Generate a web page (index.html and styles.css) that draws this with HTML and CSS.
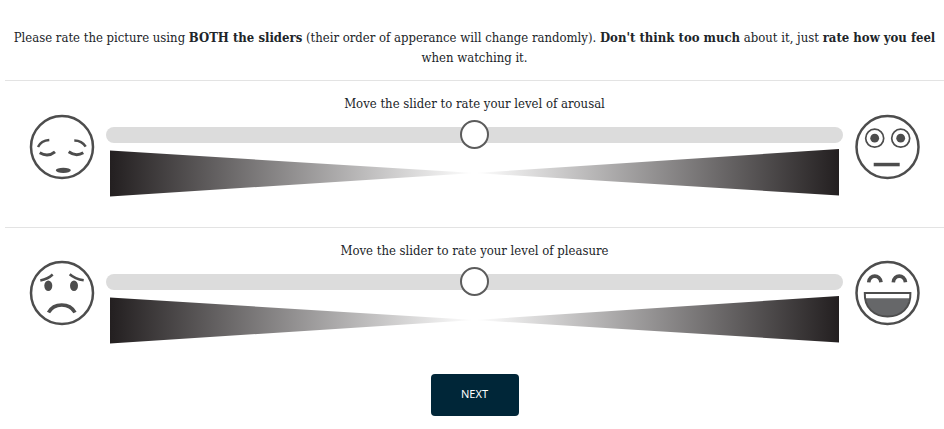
FILE: index.html
```html
<!DOCTYPE html>
<html lang="en">
<head>
<meta charset="utf-8">
<meta name="viewport" content="width=device-width, initial-scale=1">
<title>Picture rating</title>
<link rel="stylesheet" href="styles.css">
</head>
<body>
<form class="survey">
  <p class="intro">Please rate the picture using <b>BOTH the sliders</b> (their order of apperance will change randomly). <b>Don't think too much</b> about it, just <b>rate how you feel</b> when watching it.</p>

  <section class="rating">
    <label class="rating-label" for="arousal">Move the slider to rate your level of arousal</label>
    <div class="rating-row">
      <svg class="face" viewBox="0 0 64 64" aria-hidden="true">
        <circle class="line" cx="32" cy="32" r="31"/>
        <path class="line" d="M8 32Q11 25.500 19.300 25M44.300 25.500Q52 25.500 55.700 31.700"/>
        <path class="line thick" d="M9.700 37.800Q18 42.500 25 36.800M38.700 36.800Q46 42 53.300 37.800"/>
        <ellipse class="solid" cx="33.300" cy="55.300" rx="7.500" ry="2.600"/>
      </svg>
      <div class="scale">
        <input class="slider" id="arousal" type="range" min="0" max="100" value="50">
        <svg class="wedges" viewBox="0 0 728 48" preserveAspectRatio="none" aria-hidden="true">
          <defs>
            <linearGradient id="fade-out"><stop offset="0" stop-color="#231f20"/><stop offset="1" stop-color="#fff"/></linearGradient>
            <linearGradient id="fade-in"><stop offset="0" stop-color="#fff"/><stop offset="1" stop-color="#231f20"/></linearGradient>
          </defs>
          <path fill="url(#fade-out)" d="M0 1.500L364 24L0 47.500z"/>
          <path fill="url(#fade-in)" d="M728 0L364 24L728 46.500z"/>
        </svg>
      </div>
      <svg class="face" viewBox="0 0 64 64" aria-hidden="true">
        <circle class="line" cx="32.500" cy="32" r="31"/>
        <circle class="line thin" cx="19.700" cy="23.200" r="9"/>
        <circle class="line thin" cx="45.700" cy="23.200" r="9"/>
        <circle class="solid" cx="19.700" cy="23.200" r="4.400"/>
        <circle class="solid" cx="45.700" cy="23.200" r="4.400"/>
        <path class="solid" d="M18.700 47.800h26v3.500h-26z"/>
      </svg>
    </div>
  </section>

  <section class="rating">
    <label class="rating-label" for="pleasure">Move the slider to rate your level of pleasure</label>
    <div class="rating-row">
      <svg class="face" viewBox="0 0 64 64" aria-hidden="true">
        <circle class="line" cx="32" cy="31" r="31"/>
        <path class="line" d="M10.300 18.500Q18 17 22.700 12.500M39.700 12.300Q45 17 53.700 18.300"/>
        <ellipse class="solid" cx="18.300" cy="23.700" rx="4" ry="5.300"/>
        <ellipse class="solid" cx="44" cy="23.700" rx="4" ry="5.300"/>
        <path class="line heavy" d="M18.500 50.500C24 40.500 39.500 40.500 45 50.500"/>
      </svg>
      <div class="scale">
        <input class="slider" id="pleasure" type="range" min="0" max="100" value="50">
        <svg class="wedges" viewBox="0 0 728 48" preserveAspectRatio="none" aria-hidden="true">
          <path fill="url(#fade-out)" d="M0 1.500L364 24L0 47.500z"/>
          <path fill="url(#fade-in)" d="M728 0L364 24L728 46.500z"/>
        </svg>
      </div>
      <svg class="face" viewBox="0 0 64 64" aria-hidden="true">
        <circle class="line" cx="32.500" cy="31" r="31"/>
        <path class="line heavy" d="M13.700 20.300C14.500 12 25 12 26 20.300M38.300 20.300C39 12 49.500 12 50.500 20.300"/>
        <path class="grin" d="M10.500 36.300H54.500C53 48 44 54.500 32.500 54.500S12 48 10.500 36.300z"/>
        <path class="line medium" d="M9.800 31H55.400C56 46 46 54.500 32.600 54.500S9.200 46 9.800 31z"/>
      </svg>
    </div>
  </section>

  <button class="next" type="button">NEXT</button>
</form>
</body>
</html>
```
FILE: styles.css
```css
* {
  box-sizing: border-box;
}

body {
  margin: 0;
  background: #fff;
  color: #212529;
  font-family: "Roboto Slab", "DejaVu Serif Condensed", "DejaVu Serif", serif;
  font-size: 13px;
  line-height: 20px;
}

.survey {
  display: flex;
  flex-direction: column;
  margin-left: 5px;
  padding-top: 28px;
}

.intro {
  margin: 0;
  padding: 0 4px 12px;
  text-align: center;
}

.rating {
  border-top: 1px solid #e3e3e3;
  padding: 13px 25px 30px;
}

.rating-label {
  display: block;
  text-align: center;
}

.rating-row {
  display: grid;
  grid-template-columns: 64px 1fr 64px;
  gap: 12px;
  align-items: start;
}

.face {
  display: block;
  width: 64px;
  height: 64px;
  margin-top: 1px;
  overflow: visible;
}

.line {
  fill: none;
  stroke: #4d4d4d;
  stroke-width: 2.5;
}

.thin {
  stroke-width: 1.7;
}

.medium {
  stroke-width: 2;
}

.thick {
  stroke-width: 3;
}

.heavy {
  stroke-width: 3.6;
}

.solid {
  fill: #4d4d4d;
}

.grin {
  fill: #666769;
}

.scale {
  display: flex;
  flex-direction: column;
  padding-top: 6px;
}

.slider {
  appearance: none;
  width: 100%;
  height: 29px;
  margin: 0;
  background: transparent;
}

.slider::-webkit-slider-runnable-track {
  height: 16px;
  border-radius: 8px;
  background: #dcdcdc;
}

.slider::-webkit-slider-thumb {
  appearance: none;
  width: 29px;
  height: 29px;
  margin-top: -7px;
  border: 2px solid #5c5c5c;
  border-radius: 50%;
  background: #fff;
}

.wedges {
  display: block;
  height: 48px;
  margin: 0 4px;
}

.next {
  align-self: center;
  width: 88px;
  height: 42px;
  padding: 0 0 4px;
  border: 0;
  border-radius: 4px;
  background: #002638;
  color: #fff;
  font-family: "Noto Sans", sans-serif;
  font-size: 11px;
}
```
